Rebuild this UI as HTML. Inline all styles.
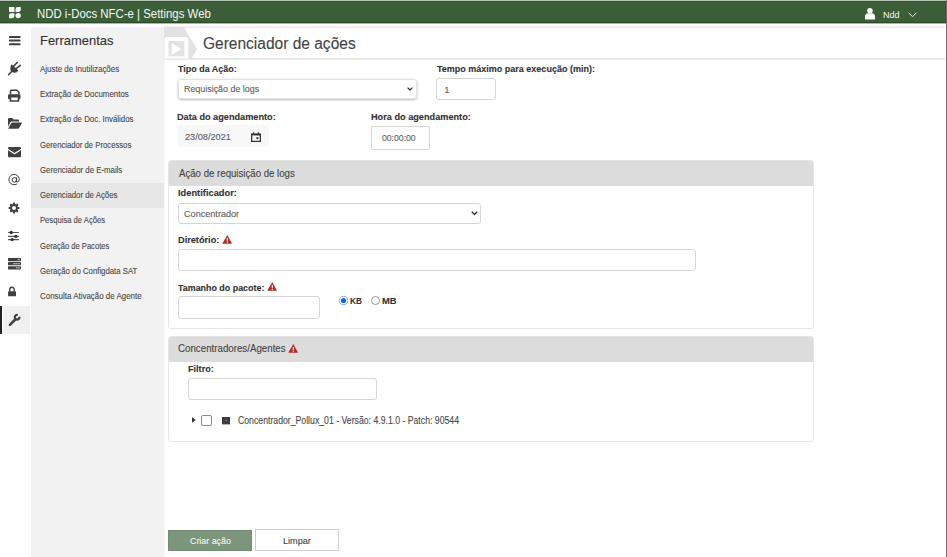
<!DOCTYPE html>
<html><head><meta charset="utf-8">
<style>
html,body{margin:0;padding:0;}
body{width:947px;height:557px;overflow:hidden;position:relative;background:#fff;font-family:"Liberation Sans",sans-serif;}
.a{position:absolute;box-sizing:border-box;}
.t{position:absolute;line-height:1;white-space:nowrap;transform-origin:0 0;-webkit-text-stroke:0.12px currentColor;}
svg{position:absolute;overflow:visible;}
</style></head><body>
<!-- top bar -->
<div class="a" style="left:0;top:0;width:947px;height:1px;background:#b6c3b7"></div>
<div class="a" style="left:0;top:1px;width:946px;height:22px;background:#3b5e39;border-top:1px solid #325433;border-right:1px solid #325433;border-bottom:1px solid #2a4a28"></div>
<div class="a" style="left:0;top:23px;width:947px;height:1px;background:#a9b8a8"></div>
<!-- logo -->
<svg style="left:9.2px;top:7.1px" width="12" height="12" viewBox="0 0 12 12">
 <rect x="0" y="0" width="5.4" height="4.9" fill="#fff"/>
 <path d="M6.5 2.4a2.4 2.4 0 0 1 2.4-2.4h2.9v2.5a2.4 2.4 0 0 1-2.4 2.4h-2.9z" fill="#fff"/>
 <path d="M0 8.6a2.4 2.4 0 0 1 2.4-2.4h3v2.6a2.4 2.4 0 0 1-2.4 2.4h-3z" fill="#fff"/>
 <circle cx="9.15" cy="8.6" r="2.65" fill="#fff"/>
</svg>
<!-- user -->
<svg style="left:865px;top:7.6px" width="10" height="12" viewBox="0 0 10 12">
 <circle cx="4.95" cy="2.75" r="2.75" fill="#fff"/>
 <path d="M0 11.4v-2.6q0-3.5 3.2-3.5h3.6q3.2 0 3.2 3.5v2.6z" fill="#fff"/>
</svg>
<svg style="left:908px;top:12px" width="9" height="6" viewBox="0 0 9 6">
 <path d="M0.5 0.7l4 4 4-4" fill="none" stroke="#e6ece6" stroke-width="1"/>
</svg>

<!-- sidebar -->
<div class="a" style="left:31px;top:27px;width:133px;height:530px;background:#f2f2f2"></div>
<div class="a" style="left:164px;top:60px;width:1px;height:497px;background:#f7f7f7"></div>
<div class="a" style="left:31px;top:182.6px;width:133px;height:25.2px;background:#e7e7e7"></div>
<div class="a" style="left:3px;top:306px;width:27px;height:28px;background:#f0f0f0"></div>
<div class="a" style="left:0;top:306px;width:2px;height:28px;background:#222"></div>

<!-- icons column -->
<svg style="left:9.2px;top:36.3px" width="12" height="10" viewBox="0 0 12 10">
 <rect x="0" y="0" width="11.5" height="2" rx="0.6" fill="#404040"/>
 <rect x="0" y="3.6" width="11.5" height="2" rx="0.6" fill="#404040"/>
 <rect x="0" y="7.3" width="11.5" height="2" rx="0.6" fill="#404040"/>
</svg>
<!-- plug -->
<svg style="left:4px;top:58px" width="22" height="22" viewBox="4 58 22 22">
 <path d="M13.4 66.4L17.3 62.5M15.8 68.8L20.3 65.3" stroke="#404040" stroke-width="1.6" stroke-linecap="round"/>
 <path d="M11.6 64.2L18.4 70.6Q16.6 73.4 13.4 72.6Q10.2 71.6 10.3 68.4Q10.4 65.6 11.6 64.2z" fill="#404040"/>
 <path d="M12 71.2L8.6 74.6" stroke="#404040" stroke-width="1.5" stroke-linecap="round"/>
</svg>
<!-- print -->
<svg style="left:8px;top:90px" width="13" height="12" viewBox="0 0 13 12">
 <path d="M2.5 4.5v-3.5q0-0.8 0.8-0.8h5.6l2 2v2.3" fill="none" stroke="#404040" stroke-width="1.5"/>
 <rect x="0" y="4.3" width="12.5" height="5" rx="1.2" fill="#404040"/>
 <path d="M2.5 7.5v3.5h8v-3.5" fill="#fff" stroke="#404040" stroke-width="1.5"/>
</svg>
<!-- folder open -->
<svg style="left:8px;top:118px" width="14" height="11" viewBox="0 0 14 11">
 <path d="M0 1q0-1 1-1h3.2l1.4 1.4h4.4q1 0 1 1v1.2h-7.4q-1 0-1.4 0.8l-2.2 4.4z" fill="#404040"/>
 <path d="M0.2 10.8l2.9-5.6q0.4-0.8 1.3-0.8h9.2q0.6 0 0.3 0.6l-2.8 5.1q-0.4 0.7-1.2 0.7z" fill="#404040"/>
</svg>
<!-- envelope -->
<svg style="left:8px;top:147px" width="13" height="11" viewBox="0 0 13 11">
 <path d="M0 1.2q0-1.2 1.2-1.2h10.6q1.2 0 1.2 1.2v0.6l-6.5 4.2l-6.5-4.2z" fill="#404040"/>
 <path d="M0 3.3l6.5 4.2l6.5-4.2v5.9q0 1-1 1h-11q-1 0-1-1z" fill="#404040"/>
</svg>
<!-- at -->
<svg style="left:4.6px;top:170px" width="20" height="20" viewBox="4 170 20 20">
 <circle cx="13.4" cy="179.9" r="2.3" fill="none" stroke="#404040" stroke-width="1"/>
 <path d="M15.9 177.2l-0.8 3.6q-0.2 1.2 0.9 1.2q2.3 0 2.3-2.6a5.2 5.2 0 1 0-2.2 4.4" fill="none" stroke="#404040" stroke-width="1"/>
</svg>
<!-- cog -->
<svg style="left:7.5px;top:201.7px" width="12" height="12" viewBox="0 0 12 12">
 <g fill="#404040" transform="translate(6 6)">
  <circle r="3.9"/>
  <rect x="-1.05" y="-5.4" width="2.1" height="10.8" rx="0.4"/>
  <rect x="-1.05" y="-5.4" width="2.1" height="10.8" rx="0.4" transform="rotate(45)"/>
  <rect x="-1.05" y="-5.4" width="2.1" height="10.8" rx="0.4" transform="rotate(90)"/>
  <rect x="-1.05" y="-5.4" width="2.1" height="10.8" rx="0.4" transform="rotate(135)"/>
 </g>
 <circle cx="6" cy="6" r="2" fill="#fff"/>
</svg>
<!-- sliders -->
<svg style="left:4px;top:226px" width="20" height="20" viewBox="4 226 20 20">
 <g stroke="#555" stroke-width="1.1"><path d="M8.1 232.5h10.8M8.1 236.4h10.8M8.1 239.6h10.8"/></g>
 <g fill="#333"><circle cx="11.2" cy="232.5" r="1.65"/><circle cx="15.85" cy="236.4" r="1.65"/><circle cx="12.1" cy="239.6" r="1.65"/></g>
</svg>
<!-- server -->
<svg style="left:8px;top:257.8px" width="13" height="12" viewBox="0 0 13 12">
 <g fill="#404040"><rect x="0" y="0" width="13" height="3.2" rx="0.6"/><rect x="0" y="4.1" width="13" height="3.2" rx="0.6"/><rect x="0" y="8.2" width="13" height="3.2" rx="0.6"/></g>
 <g fill="#aaa"><rect x="9.5" y="1" width="2.5" height="1.2"/><rect x="5" y="5.1" width="7" height="1.2"/><rect x="8" y="9.2" width="4" height="1.2"/></g>
</svg>
<!-- lock -->
<svg style="left:8px;top:285.5px" width="10" height="12" viewBox="0 0 10 12">
 <path d="M1.75 5.6v-2.1a2.25 2.25 0 0 1 4.5 0v2.1" fill="none" stroke="#404040" stroke-width="1.4"/>
 <rect x="0.1" y="5.3" width="7.9" height="5" rx="0.5" fill="#404040"/>
</svg>
<!-- wrench -->
<svg style="left:4px;top:310px" width="20" height="20" viewBox="4 310 20 20">
 <path d="M15.2 319.5L9.9 324.8" stroke="#404040" stroke-width="2.5" stroke-linecap="round"/>
 <path d="M19.35 316.7A2.3 2.3 0 1 1 17.7 315.05" fill="none" stroke="#404040" stroke-width="2.3"/>
</svg>

<!-- main content -->
<div class="a" style="left:946px;top:0;width:1px;height:557px;background:#6e6e6e"></div>
<div class="a" style="left:164px;top:26px;width:781px;height:1px;background:#f1f1f1"></div>
<div class="a" style="left:164px;top:27px;width:781px;height:1px;background:#e9e9e9"></div>
<div class="a" style="left:164px;top:58px;width:781px;height:2px;background:#e8e8e8"></div>
<!-- chevron deco -->
<svg style="left:164px;top:27px" width="34" height="32" viewBox="0 0 34 32">
 <path d="M0 0h19.8l13.3 22.2l-5.6 9.4h-27.5z" fill="#e2e2e2"/>
 <path d="M0.5 13q0-3 3-3h17.8q3 0 3 3v18.6h-23.8z" fill="#fff"/>
 <rect x="4.5" y="14" width="15.8" height="15.3" fill="#e2e2e2"/>
 <path d="M7.7 16v12l9.8-6z" fill="#fff"/>
</svg>

<!-- select tipo -->
<div class="a" style="left:178px;top:78.5px;width:238.5px;height:20.5px;border:1px solid #e2e2e2;border-radius:3px;box-shadow:0 1px 2.5px rgba(0,0,0,0.28)"></div>
<svg style="left:407px;top:86.5px" width="6" height="4" viewBox="0 0 6 4"><path d="M0.6 0.6l2.4 2.4 2.4-2.4" fill="none" stroke="#333" stroke-width="1.3"/></svg>
<!-- tempo input -->
<div class="a" style="left:436px;top:78px;width:60px;height:22px;border:1px solid #d6d6d6;border-radius:3px"></div>
<!-- date input -->
<div class="a" style="left:177.5px;top:125px;width:91px;height:22px;background:#f8f8f8;border-radius:3px"></div>
<svg style="left:251px;top:132px" width="10" height="10" viewBox="0 0 10 10">
 <path d="M0.65 2.2h8.7v7.15h-8.7z" fill="#fff" stroke="#333" stroke-width="1.3"/>
 <path d="M0.65 1.8h8.7v1.6h-8.7z" fill="#333"/>
 <rect x="2.1" y="0.2" width="1.1" height="2" fill="#333"/><rect x="6.8" y="0.2" width="1.1" height="2" fill="#333"/>
 <rect x="5.4" y="5.2" width="2" height="2" fill="#333"/>
</svg>
<!-- time input -->
<div class="a" style="left:371px;top:125.5px;width:59px;height:24.5px;border:1px solid #d6d6d6;border-radius:2px"></div>

<!-- panel 1 -->
<div class="a" style="left:168px;top:160px;width:646px;height:169px;border:1px solid #e6e6e6;border-radius:3px;overflow:hidden">
 <div class="a" style="left:-1px;top:-1px;width:calc(100% + 2px);height:26px;background:#dcdcdc"></div>
</div>
<div class="a" style="left:178px;top:202.5px;width:302.5px;height:21px;border:1px solid #d6d6d6;border-radius:3px"></div>
<svg style="left:471px;top:210.5px" width="7" height="5" viewBox="0 0 7 5"><path d="M0.8 0.8l2.7 2.7 2.7-2.7" fill="none" stroke="#333" stroke-width="1.4"/></svg>
<svg style="left:221.6px;top:234.8px" width="10" height="9" viewBox="0 0 10 9"><path d="M5 0.6q0.3-0.5 0.6 0l4.2 7.6q0.3 0.6-0.3 0.6h-8.7q-0.6 0-0.3-0.6z" fill="#ad2f2a"/><rect x="4.75" y="2.9" width="1.1" height="3.2" fill="#fff"/><rect x="4.75" y="6.7" width="1.1" height="1.1" fill="#fff"/></svg>
<div class="a" style="left:178px;top:249px;width:518px;height:22px;border:1px solid #d6d6d6;border-radius:3px"></div>
<svg style="left:266.8px;top:282.2px" width="10" height="9" viewBox="0 0 10 9"><path d="M5 0.6q0.3-0.5 0.6 0l4.2 7.6q0.3 0.6-0.3 0.6h-8.7q-0.6 0-0.3-0.6z" fill="#ad2f2a"/><rect x="4.75" y="2.9" width="1.1" height="3.2" fill="#fff"/><rect x="4.75" y="6.7" width="1.1" height="1.1" fill="#fff"/></svg>
<div class="a" style="left:178px;top:296.3px;width:142px;height:22.3px;border:1px solid #d6d6d6;border-radius:3px"></div>
<svg style="left:339px;top:295.5px" width="9" height="9" viewBox="0 0 9 9"><circle cx="4.5" cy="4.5" r="4.1" fill="#fff" stroke="#79aef7" stroke-width="1"/><circle cx="4.5" cy="4.5" r="2.6" fill="#0b68f0"/></svg>
<svg style="left:371px;top:295.5px" width="9" height="9" viewBox="0 0 9 9"><circle cx="4.5" cy="4.5" r="4" fill="#fff" stroke="#8a8a8a" stroke-width="0.9"/></svg>

<!-- panel 2 -->
<div class="a" style="left:168px;top:336px;width:646px;height:106px;border:1px solid #e6e6e6;border-radius:3px;overflow:hidden">
 <div class="a" style="left:-1px;top:-1px;width:calc(100% + 2px);height:25.5px;background:#dcdcdc"></div>
</div>
<svg style="left:287.8px;top:344px" width="10" height="9" viewBox="0 0 10 9"><path d="M5 0.6q0.3-0.5 0.6 0l4.2 7.6q0.3 0.6-0.3 0.6h-8.7q-0.6 0-0.3-0.6z" fill="#ad2f2a"/><rect x="4.75" y="2.9" width="1.1" height="3.2" fill="#fff"/><rect x="4.75" y="6.7" width="1.1" height="1.1" fill="#fff"/></svg>
<div class="a" style="left:188px;top:377.5px;width:189px;height:22.3px;border:1px solid #d6d6d6;border-radius:3px"></div>
<svg style="left:191.5px;top:417.3px" width="4" height="6" viewBox="0 0 4 6"><path d="M0 0l3.7 2.9-3.7 2.9z" fill="#333"/></svg>
<div class="a" style="left:201px;top:415px;width:11px;height:11px;border:1px solid #8c8c8c;border-radius:2px;background:#fff"></div>
<svg style="left:222px;top:417px" width="8" height="7.4" viewBox="0 0 8 7.4"><rect x="0" y="0" width="8" height="7.4" fill="#3c3c3c"/><rect x="3.6" y="3" width="1" height="1" fill="#bbb"/></svg>

<!-- buttons -->
<div class="a" style="left:168px;top:529.5px;width:84.3px;height:21.2px;background:#7b967b;border:1px solid #728d72"></div>
<div class="a" style="left:255px;top:529.4px;width:84.3px;height:21.3px;border:1px solid #cfcfcf;background:#fff"></div>

<div class="t" style="left:37.26px;top:7.00px;font-size:13px;color:#f4f7f4;transform:scaleX(0.8771);-webkit-text-stroke:0;">NDD i-Docs NFC-e | Settings Web</div>
<div class="t" style="left:882.96px;top:11.00px;font-size:8.8px;color:#f4f7f4;transform:scaleX(1.0237);-webkit-text-stroke:0;">Ndd</div>
<div class="t" style="left:40.04px;top:34.00px;font-size:13px;color:#333;transform:scaleX(0.9965);">Ferramentas</div>
<div class="t" style="left:40.48px;top:65.00px;font-size:8.8px;color:#4a4a4a;transform:scaleX(0.9049);">Ajuste de Inutilizações</div>
<div class="t" style="left:39.85px;top:90.00px;font-size:8.8px;color:#4a4a4a;transform:scaleX(0.8984);">Extração de Documentos</div>
<div class="t" style="left:39.85px;top:115.00px;font-size:8.8px;color:#4a4a4a;transform:scaleX(0.8938);">Extração de Doc. Inválidos</div>
<div class="t" style="left:40.11px;top:141.00px;font-size:8.8px;color:#4a4a4a;transform:scaleX(0.8763);">Gerenciador de Processos</div>
<div class="t" style="left:40.11px;top:166.00px;font-size:8.8px;color:#4a4a4a;transform:scaleX(0.8904);">Gerenciador de E-mails</div>
<div class="t" style="left:40.11px;top:191.00px;font-size:8.8px;color:#4a4a4a;transform:scaleX(0.8897);">Gerenciador de Ações</div>
<div class="t" style="left:39.87px;top:216.00px;font-size:8.8px;color:#4a4a4a;transform:scaleX(0.8698);">Pesquisa de Ações</div>
<div class="t" style="left:40.12px;top:242.00px;font-size:8.8px;color:#4a4a4a;transform:scaleX(0.8636);">Geração de Pacotes</div>
<div class="t" style="left:40.11px;top:267.00px;font-size:8.8px;color:#4a4a4a;transform:scaleX(0.8863);">Geração do Configdata SAT</div>
<div class="t" style="left:40.10px;top:292.00px;font-size:8.8px;color:#4a4a4a;transform:scaleX(0.9039);">Consulta Ativação de Agente</div>
<div class="t" style="left:203.22px;top:36.00px;font-size:16px;color:#444;transform:scaleX(0.9696);">Gerenciador de ações</div>
<div class="t" style="left:177.70px;top:64.00px;font-size:9.6px;color:#333;font-weight:bold;transform:scaleX(0.9321);">Tipo da Ação:</div>
<div class="t" style="left:436.50px;top:64.00px;font-size:9.6px;color:#333;font-weight:bold;transform:scaleX(0.9381);">Tempo máximo para execução (min):</div>
<div class="t" style="left:177.39px;top:112.00px;font-size:9.6px;color:#333;font-weight:bold;transform:scaleX(0.9544);">Data do agendamento:</div>
<div class="t" style="left:371.29px;top:112.00px;font-size:9.6px;color:#333;font-weight:bold;transform:scaleX(0.9552);">Hora do agendamento:</div>
<div class="t" style="left:177.98px;top:188.00px;font-size:9.6px;color:#333;font-weight:bold;transform:scaleX(0.9697);">Identificador:</div>
<div class="t" style="left:178.19px;top:235.00px;font-size:9.6px;color:#333;font-weight:bold;transform:scaleX(0.9566);">Diretório:</div>
<div class="t" style="left:178.30px;top:283.00px;font-size:9.6px;color:#333;font-weight:bold;transform:scaleX(0.9276);">Tamanho do pacote:</div>
<div class="t" style="left:187.69px;top:364.00px;font-size:9.6px;color:#333;font-weight:bold;transform:scaleX(0.9489);">Filtro:</div>
<div class="t" style="left:350.45px;top:296.00px;font-size:9.6px;color:#333;font-weight:bold;transform:scaleX(0.8608);">KB</div>
<div class="t" style="left:381.97px;top:296.00px;font-size:9.6px;color:#333;font-weight:bold;transform:scaleX(0.9753);">MB</div>
<div class="t" style="left:183.67px;top:85.00px;font-size:9.3px;color:#606060;transform:scaleX(0.9567);">Requisição de logs</div>
<div class="t" style="left:444.29px;top:86.00px;font-size:9.3px;color:#606060;">1</div>
<div class="t" style="left:185.24px;top:133.00px;font-size:9.3px;color:#606060;transform:scaleX(0.9867);">23/08/2021</div>
<div class="t" style="left:381.86px;top:134.00px;font-size:9.3px;color:#606060;transform:scaleX(0.9306);">00:00:00</div>
<div class="t" style="left:184.44px;top:210.00px;font-size:9.3px;color:#606060;transform:scaleX(0.9784);">Concentrador</div>
<div class="t" style="left:237.66px;top:416.00px;font-size:10px;color:#4a4a4a;transform:scaleX(0.8699);">Concentrador_Pollux_01 - Versão: 4.9.1.0 - Patch: 90544</div>
<div class="t" style="left:189.55px;top:536.00px;font-size:9.7px;color:#fff;transform:scaleX(0.9158);-webkit-text-stroke:0;">Criar ação</div>
<div class="t" style="left:283.05px;top:536.00px;font-size:9.7px;color:#444;transform:scaleX(0.9423);">Limpar</div>
<div class="t" style="left:178.58px;top:168.00px;font-size:10.7px;color:#444;transform:scaleX(0.9021);">Ação de requisição de logs</div>
<div class="t" style="left:178.01px;top:343.00px;font-size:10.7px;color:#444;transform:scaleX(0.9105);">Concentradores/Agentes</div>
</body></html>
